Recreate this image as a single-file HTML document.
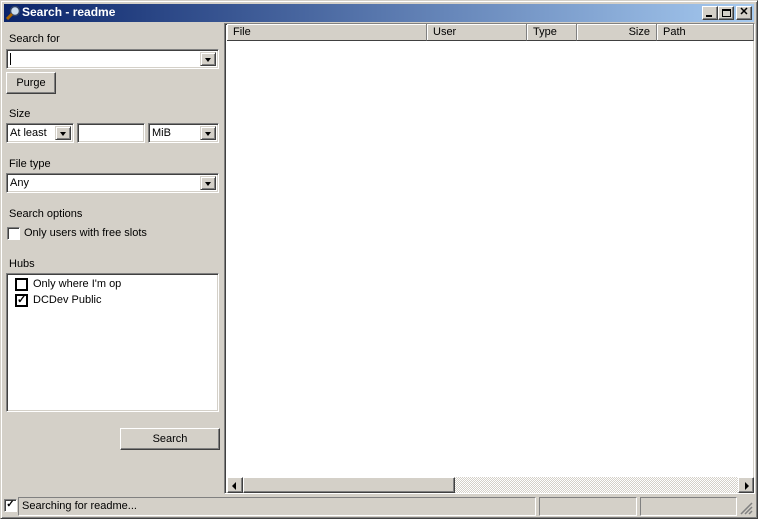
<!DOCTYPE html><html><head><style>
*{box-sizing:border-box;margin:0;padding:0}
body{width:758px;height:519px;background:#d4d0c8;font-family:"Liberation Sans",sans-serif;font-size:11px;position:relative;overflow:hidden;color:#000}
.a{position:absolute}
.sunk{border:1px solid;border-color:#808080 #fff #fff #808080;box-shadow:inset 1px 1px 0 #404040,inset -1px -1px 0 #d4d0c8;background:#fff}
.rais{background:#d4d0c8;border:1px solid;border-color:#fff #404040 #404040 #fff;box-shadow:inset -1px -1px 0 #808080}
.dd{position:absolute;right:2px;top:2px;width:16px;bottom:2px;background:#d4d0c8;border:1px solid;border-color:#d4d0c8 #404040 #404040 #d4d0c8;box-shadow:inset 1px 1px 0 #fff,inset -1px -1px 0 #808080}
.dd:after{content:"";position:absolute;left:4px;top:5px;border:3.5px solid transparent;border-top:4px solid #000;border-bottom:0}
.lbl{position:absolute;left:9px;font-size:11px}
.t{position:absolute;left:3px;top:3px}
.hd{position:absolute;top:0;height:17px;background:#d4d0c8;border-right:1px solid #808080;box-shadow:inset 1px 1px 0 #fff;padding:2px 6px;border-bottom:1px solid #404040;font-size:11px}
.cb{position:absolute;width:13px;height:13px;background:#fff;border:1px solid;border-color:#808080 #fff #fff #808080;box-shadow:inset 1px 1px 0 #404040}
</style></head><body>
<div class="a" style="left:0;top:0;width:758px;height:519px;border:1px solid;border-color:#d4d0c8 #404040 #404040 #d4d0c8;box-shadow:inset 1px 1px 0 #fff,inset -1px -1px 0 #808080"></div>
<div class="a" style="left:4px;top:4px;width:750px;height:18px;background:linear-gradient(90deg,#0a246a,#a6caf0)"></div>
<svg class="a" style="left:5px;top:5px" width="16" height="16"><circle cx="10" cy="6" r="4.5" fill="#cde" stroke="#346" stroke-width="1.5"/><line x1="7" y1="9" x2="2" y2="14" stroke="#a60" stroke-width="3"/></svg>
<div class="a" style="left:22px;top:5px;color:#fff;font-weight:bold;font-size:12px">Search - readme</div>
<div class="a rais" style="left:702px;top:6px;width:16px;height:14px"><div class="a" style="left:3px;top:8px;width:6px;height:2px;background:#000"></div></div>
<div class="a rais" style="left:718px;top:6px;width:16px;height:14px"><div class="a" style="left:3px;top:2px;width:9px;height:8px;border:1px solid #000;border-top-width:2px"></div></div>
<div class="a rais" style="left:736px;top:6px;width:16px;height:14px;font-weight:bold;font-size:11px;text-align:center;line-height:11px">✕</div>

<div class="lbl" style="top:33px">Search for</div>
<div class="a sunk" style="left:6px;top:49px;width:213px;height:20px"><div class="a" style="left:3px;top:3px;width:1px;height:12px;background:#000"></div><div class="dd"></div></div>
<div class="a rais" style="left:6px;top:72px;width:50px;height:22px;text-align:center;line-height:20px">Purge</div>
<div class="lbl" style="top:108px">Size</div>
<div class="a sunk" style="left:6px;top:123px;width:68px;height:20px"><span class="t">At least</span><div class="dd"></div></div>
<div class="a sunk" style="left:77px;top:123px;width:68px;height:20px"></div>
<div class="a sunk" style="left:148px;top:123px;width:71px;height:20px"><span class="t">MiB</span><div class="dd"></div></div>
<div class="lbl" style="top:158px">File type</div>
<div class="a sunk" style="left:6px;top:173px;width:213px;height:20px"><span class="t">Any</span><div class="dd"></div></div>
<div class="lbl" style="top:208px">Search options</div>
<div class="cb" style="left:7px;top:227px"></div>
<div class="a" style="left:24px;top:227px">Only users with free slots</div>
<div class="lbl" style="top:258px">Hubs</div>
<div class="a sunk" style="left:6px;top:273px;width:213px;height:139px">
<div class="a" style="left:8px;top:4px;width:13px;height:13px;border:2px solid #000"></div><div class="a" style="left:26px;top:4px">Only where I'm op</div>
<div class="a" style="left:8px;top:20px;width:13px;height:13px;border:2px solid #000;font-size:11px;line-height:9px;text-align:center;font-weight:bold">✓</div><div class="a" style="left:26px;top:20px">DCDev Public</div>
</div>
<div class="a rais" style="left:120px;top:428px;width:100px;height:22px;text-align:center;line-height:20px">Search</div>

<div class="a sunk" style="left:224px;top:23px;width:531px;height:471px">
<div class="hd" style="left:2px;width:200px">File</div>
<div class="hd" style="left:202px;width:100px">User</div>
<div class="hd" style="left:302px;width:50px">Type</div>
<div class="hd" style="left:352px;width:80px;text-align:right">Size</div>
<div class="hd" style="left:432px;width:97px">Path</div>
<div class="a" style="left:2px;top:453px;width:527px;height:16px;background:repeating-conic-gradient(#d4d0c8 0 25%,#fff 0 50%) 0 0/2px 2px"></div>
<div class="a rais" style="left:2px;top:453px;width:16px;height:16px"><div class="a" style="left:4px;top:4px;border:4px solid transparent;border-right:4px solid #000;border-left:0"></div></div>
<div class="a rais" style="left:18px;top:453px;width:212px;height:16px"></div>
<div class="a rais" style="left:513px;top:453px;width:16px;height:16px"><div class="a" style="left:6px;top:4px;border:4px solid transparent;border-left:4px solid #000;border-right:0"></div></div>
</div>

<div class="cb" style="left:4px;top:499px;font-size:10px;line-height:10px;font-weight:bold;text-align:center">✓</div>
<div class="a" style="left:18px;top:497px;width:518px;height:19px;border:1px solid;border-color:#808080 #fff #fff #808080;padding:2px 3px">Searching for readme...</div>
<div class="a" style="left:539px;top:497px;width:98px;height:19px;border:1px solid;border-color:#808080 #fff #fff #808080"></div>
<div class="a" style="left:640px;top:497px;width:97px;height:19px;border:1px solid;border-color:#808080 #fff #fff #808080"></div>
<svg class="a" style="left:740px;top:502px" width="14" height="14"><path d="M12 1L1 12M12 5L5 12M12 9L9 12" stroke="#808080" stroke-width="1.5"/></svg>
</body></html>
